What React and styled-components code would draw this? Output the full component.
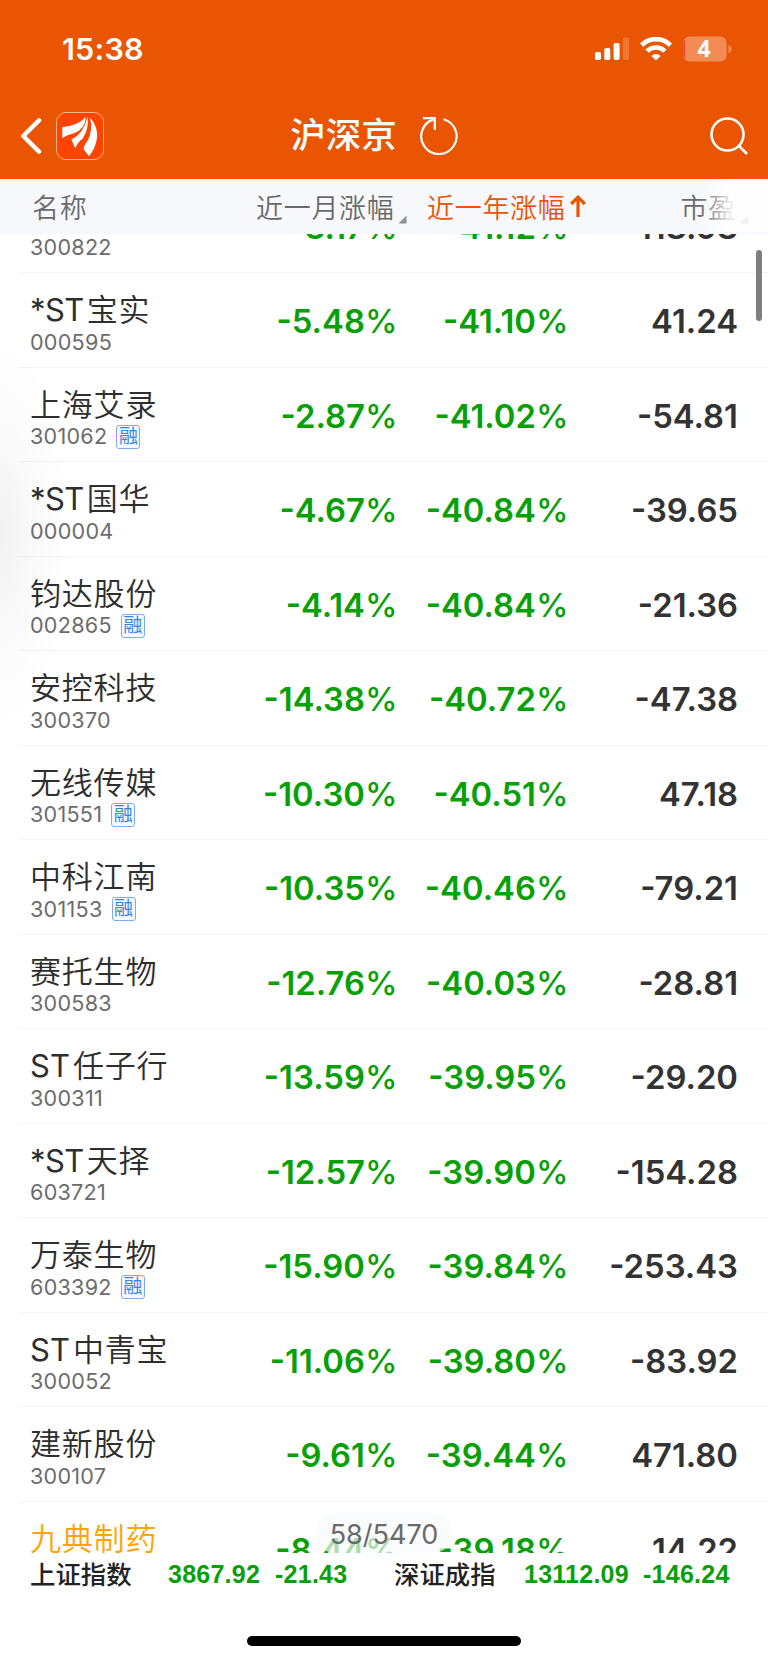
import React from "react";
import styled, { createGlobalStyle } from "styled-components";

const GlobalStyle = createGlobalStyle`
* { box-sizing: border-box; }
body {
  margin: 0;
  background: #fff;
  font-family: Inter, "Noto Sans CJK SC", sans-serif;
}
`;

const Page = styled.div`
width: 768px;
height: 1663px;
display: flex;
flex-direction: column;
overflow: hidden;
background: #fff;
`;

const Top = styled.header`
height: 179px;
flex: none;
background: #ea5504;
color: #fff;
`;

const StatusBar = styled.div`
height: 98px;
padding: 0 35px 0 62px;
display: flex;
align-items: center;
justify-content: space-between;
`;

const Clock = styled.div`
padding-bottom: 2px;
font-size: 30.5px;
font-weight: 600;
letter-spacing: 0.2px;
`;

const StatusIcons = styled.div`
display: flex;
align-items: center;
gap: 11px;
`;

const NavBar = styled.div`
height: 76px;
padding: 0 20px;
display: grid;
grid-template-columns: 1fr auto 1fr;
align-items: center;
`;

const NavLeft = styled.div`
display: flex;
align-items: center;
gap: 14px;
`;

const Title = styled.div`
display: flex;
align-items: center;
gap: 22px;
padding-right: 19px;
font-size: 35.5px;
font-weight: 500;
`;

const TitleText = styled.span`
line-height: 46px;
`;

const NavRight = styled.div`
display: flex;
justify-content: flex-end;
`;

const columns = `
display: grid;
grid-template-columns: 200px 197.5px 171px 169.5px;
`;

const HeadRow = styled.div`
${columns}
height: 55px;
flex: none;
position: relative;
align-items: center;
padding-bottom: 2px;
border-top: 1px solid #fdf3ee;
background: #f7f8fb;
color: #6a6a6c;
font-size: 27px;
font-weight: 350;
letter-spacing: 0.7px;
`;

const HeadCell = styled.div`
display: flex;
align-items: center;
white-space: nowrap;
padding-left: ${({ $first }) => ($first ? "32px" : 0)};
justify-content: ${({ $first }) => ($first ? "flex-start" : "flex-end")};
color: ${({ $active }) => ($active ? "#ea5504" : "inherit")};
margin-right: ${({ $shift }) => $shift || 0}px;
gap: 4px;
`;

const Corner = styled.i`
width: 8px;
height: 8px;
margin-top: 27px;
background: #8f9094;
clip-path: polygon(100% 0, 100% 100%, 0 100%);
`;

const Fade = styled.div`
position: absolute;
top: 0;
right: 0;
width: 68px;
height: 52px;
background: linear-gradient(to right, rgba(255, 255, 255, 0), rgba(255, 255, 255, 0.85) 30px, rgba(255, 255, 255, 0.9));
`;

const List = styled.main`
flex: 1;
min-height: 0;
overflow: hidden;
position: relative;
`;

const Rows = styled.div`
margin-top: -55.5px;
`;

const Row = styled.div`
${columns}
height: 94.5px;
position: relative;
&::after {
  content: "";
  position: absolute;
  left: 20px;
  right: 0;
  bottom: 0;
  height: 1px;
  background: #f3f4f5;
}
`;

const Stock = styled.div`
padding: 16px 0 0 30px;
white-space: nowrap;
`;

const Name = styled.div`
height: 41px;
line-height: 41px;
font-size: 31px;
font-weight: 350;
letter-spacing: 0.8px;
color: ${({ $marked }) => ($marked ? "#ffa400" : "#2e2e2e")};
`;

const Prefix = styled.span`
margin-right: 3px;
font-weight: 400;
letter-spacing: ${({ $star }) => ($star ? "-0.6px" : 0)};
`;

const CodeLine = styled.div`
height: 23px;
display: flex;
align-items: center;
gap: 9px;
font-size: 21.6px;
letter-spacing: 0.25px;
color: #6c6c6c;
`;

const Badge = styled.span`
width: 24px;
height: 24px;
margin-top: 1px;
border: 1px solid #79aeea;
border-radius: 3px;
background: #f6fafe;
color: #3585e0;
font-size: 19px;
line-height: 21px;
text-align: center;
letter-spacing: 0;
`;

const Value = styled.div`
padding-top: 1px;
line-height: 94px;
text-align: right;
white-space: nowrap;
font-size: 32.8px;
font-weight: 600;
color: ${({ $down }) => ($down ? "#07a007" : "#333")};
`;

const Percent = styled.span`
font-weight: 500;
`;

const EdgeShade = styled.div`
position: absolute;
left: -70px;
top: 105px;
width: 140px;
height: 390px;
background: radial-gradient(closest-side, rgba(0, 0, 0, 0.05), rgba(0, 0, 0, 0.025) 45%, rgba(0, 0, 0, 0));
`;

const ScrollThumb = styled.div`
position: absolute;
left: 756px;
top: 16px;
width: 6px;
height: 71px;
border-radius: 3px;
background: #7f7f7f;
`;

const Counter = styled.div`
position: absolute;
left: 315px;
bottom: 0;
width: 138px;
height: 41px;
border-radius: 21px;
background: rgba(247, 249, 252, 0.68);
color: #6a6a6a;
font-size: 27px;
line-height: 45px;
text-align: center;
`;

const Footer = styled.footer`
height: 110px;
flex: none;
display: flex;
flex-direction: column;
justify-content: space-between;
align-items: center;
padding-bottom: 17px;
`;

const Indices = styled.div`
width: 100%;
height: 42px;
padding-left: 30px;
display: grid;
grid-template-columns: 138px 107px 119px 130px 119px 1fr;
align-items: center;
white-space: nowrap;
`;

const IndexName = styled.span`
padding-bottom: 3px;
font-size: 25.4px;
font-weight: 500;
color: #222;
`;

const IndexValue = styled.span`
font-family: "Liberation Sans", sans-serif;
font-size: 25px;
font-weight: 700;
letter-spacing: 0.25px;
color: #07a007;
`;

const HomeBar = styled.div`
width: 274px;
height: 10px;
border-radius: 5px;
background: #000;
`;

const stocks = [
  ["贝仕达克", "300822", false, "-3.17%", "-41.12%", "118.98"],
  ["*ST宝实", "000595", false, "-5.48%", "-41.10%", "41.24"],
  ["上海艾录", "301062", true, "-2.87%", "-41.02%", "-54.81"],
  ["*ST国华", "000004", false, "-4.67%", "-40.84%", "-39.65"],
  ["钧达股份", "002865", true, "-4.14%", "-40.84%", "-21.36"],
  ["安控科技", "300370", false, "-14.38%", "-40.72%", "-47.38"],
  ["无线传媒", "301551", true, "-10.30%", "-40.51%", "47.18"],
  ["中科江南", "301153", true, "-10.35%", "-40.46%", "-79.21"],
  ["赛托生物", "300583", false, "-12.76%", "-40.03%", "-28.81"],
  ["ST任子行", "300311", false, "-13.59%", "-39.95%", "-29.20"],
  ["*ST天择", "603721", false, "-12.57%", "-39.90%", "-154.28"],
  ["万泰生物", "603392", true, "-15.90%", "-39.84%", "-253.43"],
  ["ST中青宝", "300052", false, "-11.06%", "-39.80%", "-83.92"],
  ["建新股份", "300107", false, "-9.61%", "-39.44%", "471.80"],
  ["九典制药", "300705", false, "-8.44%", "-39.18%", "14.22"],
];

const Signal = () => (
  <svg width="34" height="24" viewBox="0 0 34 24" fill="#fff">
    <rect x="0" y="15" width="6" height="8" rx="1.8" />
    <rect x="9.3" y="11" width="6" height="12" rx="1.8" />
    <rect x="18.6" y="6" width="6" height="17" rx="1.8" />
    <rect x="28" y="0.5" width="6" height="22.5" rx="1.8" opacity="0.2" />
  </svg>
);

const Wifi = () => (
  <svg width="32" height="24" viewBox="0 0 32 24" fill="none" stroke="#fff">
    <path d="M1.6 8.2A20.3 20.3 0 0 1 30.4 8.2" strokeWidth="4.8" />
    <path d="M7 14.2A12.8 12.8 0 0 1 25 14.2" strokeWidth="4.6" />
    <path d="M16 23.6L11.4 18.9A6.6 6.6 0 0 1 20.6 18.9Z" fill="#fff" stroke="none" />
  </svg>
);

const Battery = () => (
  <svg width="50" height="26" viewBox="0 0 50 26">
    <rect x="0.5" y="0.5" width="43" height="25" rx="6" fill="#f28c54" />
    <path d="M2 3.5V22.5Q.5 21 .5 18V8Q.5 5 2 3.5Z" fill="#ff3b30" />
    <path d="M45.5 9Q48.5 10 48.5 13T45.5 17Z" fill="#f28c54" />
    <text x="21" y="21.2" fill="#fff" fontFamily="Open Sans" fontSize="23" fontWeight="700" textAnchor="middle">4</text>
  </svg>
);

const Back = () => (
  <svg width="22" height="38" viewBox="0 0 22 38" fill="none" stroke="#fff" strokeWidth="4.4" strokeLinecap="round" strokeLinejoin="round">
    <path d="M19 3.4L3.3 19L19 34.6" />
  </svg>
);

const Logo = () => (
  <svg width="48" height="48" viewBox="0 0 48 48">
    <rect x="0.5" y="0.5" width="47" height="47" rx="9.5" fill="#ff4300" stroke="#ffb38c" />
    <path d="M6.3 15.3Q22 13.5 29.8 5Q29.5 17 18 21.2Q12 22.5 6.3 26Z" fill="#fff" />
    <path d="M31.5 4.8Q33.5 16 26.5 27Q22 29.5 19.2 36.5L15.5 27.5Q27.5 22 31.5 4.8Z" fill="#fff" />
    <path d="M34 5.5Q41.5 14 41.2 24.5Q40 36 33 44.2L27.5 37Q28 33 32 28Q37 18 34 5.5Z" fill="#fff" />
  </svg>
);

const Refresh = () => (
  <svg width="40" height="40" viewBox="0 0 40 40" fill="none" stroke="#fff" strokeWidth="2.2">
    <path d="M24.5 3.2A17.7 17.7 0 1 1 14.6 3.4" />
    <path d="M4 2.2H15.8V14" />
  </svg>
);

const Search = () => (
  <svg width="38" height="38" viewBox="0 0 38 38" fill="none" stroke="#fff" strokeWidth="2.6">
    <circle cx="17.5" cy="17.5" r="16" />
    <path d="M28.5 28.5L37 37" />
  </svg>
);

const SortArrow = () => (
  <svg width="16" height="22" viewBox="0 0 16 22" fill="none" stroke="#ea5504" strokeWidth="3.2">
    <path d="M8 22V3M1.2 9L8 2.2L14.8 9" />
  </svg>
);

// "*ST" and "ST" stand a little apart from the characters after them
const StockName = ({ name }) => {
  const [, prefix, rest] = name.match(/^(\*?ST)?(.*)$/);
  return (
    <Name $marked={name === "九典制药"}>
      {prefix && <Prefix $star={prefix[0] === "*"}>{prefix}</Prefix>}
      {rest}
    </Name>
  );
};

const App = () => {
  return (
    <Page>
      <GlobalStyle />
      <Top>
        <StatusBar>
          <Clock>15:38</Clock>
          <StatusIcons>
            <Signal />
            <Wifi />
            <Battery />
          </StatusIcons>
        </StatusBar>
        <NavBar>
          <NavLeft>
            <Back />
            <Logo />
          </NavLeft>
          <Title>
            <TitleText>沪深京</TitleText>
            <Refresh />
          </Title>
          <NavRight>
            <Search />
          </NavRight>
        </NavBar>
      </Top>
      <HeadRow>
        <HeadCell $first>名称</HeadCell>
        <HeadCell $shift={-9}>近一月涨幅<Corner /></HeadCell>
        <HeadCell $active $shift={-17}>近一年涨幅<SortArrow /></HeadCell>
        <HeadCell $shift={-10}>市盈<Corner /></HeadCell>
        <Fade />
      </HeadRow>
      <List>
        <Rows>
          {stocks.map(([name, code, margin, month, year, pe]) => (
            <Row key={code}>
              <Stock>
                <StockName name={name} />
                <CodeLine>
                  {code}
                  {margin && <Badge>融</Badge>}
                </CodeLine>
              </Stock>
              <Value $down>{month.slice(0, -1)}<Percent>%</Percent></Value>
              <Value $down>{year.slice(0, -1)}<Percent>%</Percent></Value>
              <Value>{pe}</Value>
            </Row>
          ))}
        </Rows>
        <EdgeShade />
        <ScrollThumb />
        <Counter>58/5470</Counter>
      </List>
      <Footer>
        <Indices>
          <IndexName>上证指数</IndexName>
          <IndexValue>3867.92</IndexValue>
          <IndexValue>-21.43</IndexValue>
          <IndexName>深证成指</IndexName>
          <IndexValue>13112.09</IndexValue>
          <IndexValue>-146.24</IndexValue>
        </Indices>
        <HomeBar />
      </Footer>
    </Page>
  );
};

export default App;
